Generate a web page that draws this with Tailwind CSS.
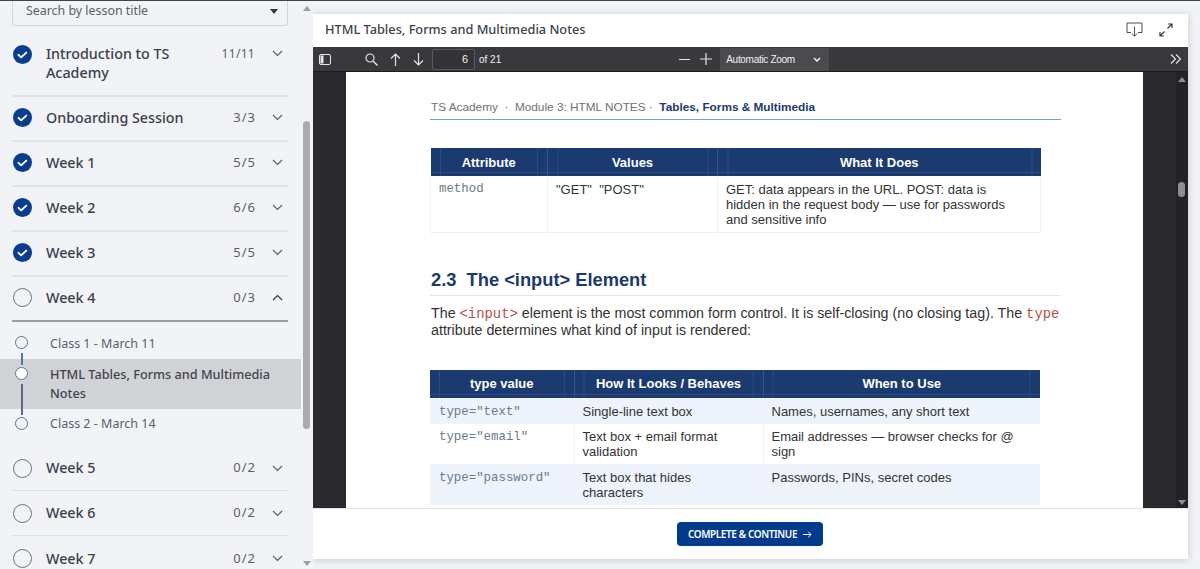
<!DOCTYPE html>
<html>
<head>
<meta charset="utf-8">
<script src="https://cdn.jsdelivr.net/npm/@tailwindcss/browser@4"></script>
</head>
<body class="m-0 h-[569px] w-[1200px] overflow-hidden bg-[#f1f3f6] font-['Noto_Sans','Open_Sans',sans-serif]">
<div class="h-px bg-[#3a4a40]"></div>
<div class="flex h-[568px]">
  <!-- Sidebar -->
  <aside class="relative h-full w-[301px] shrink-0 overflow-hidden">
    <div class="ml-3 flex h-[25px] w-[276px] items-start justify-between rounded-b-[3px] border border-t-0 border-[#d5d7dc] pl-[13px] pr-[9px] text-[12.4px] leading-[20px] text-[#5b5f6b]">
      <span>Search by lesson title</span>
      <span class="mt-[8px] h-0 w-0 border-x-[4px] border-t-[5px] border-x-transparent border-t-[#33363f]"></span>
    </div>
    <div class="ml-3 w-[276px]">
      <div class="flex h-[71px] border-b-2 border-[#e1e3e7] pt-[19px]">
        <svg class="ml-px h-[19px] w-[19px] shrink-0" viewBox="0 0 20 20"><circle cx="10" cy="10" r="10" fill="#0a3d8f"/><path d="M5.8 10.4l2.8 2.6 5.4-5" fill="none" stroke="#fff" stroke-width="2" stroke-linecap="round" stroke-linejoin="round"/></svg>
        <span class="-mt-px ml-[14px] w-[150px] text-[14.3px] font-medium leading-[19px] text-[#3b3f4c]">Introduction to TS Academy</span>
        <span class="ml-auto mr-[17px] text-[12px] leading-[18px] tracking-[0.3px] text-[#5b5f6b]">11/11</span>
        <svg class="mr-[5px] mt-[5px] h-[7px] w-[11px]" viewBox="0 0 11 7"><path d="M1 1l4.5 4.5L10 1" fill="none" stroke="#5b5f6b" stroke-width="1.2"/></svg>
      </div>
      <div class="flex h-[45px] items-center border-b-2 border-[#e1e3e7] pb-[2px]">
        <svg class="ml-px h-[19px] w-[19px] shrink-0" viewBox="0 0 20 20"><circle cx="10" cy="10" r="10" fill="#0a3d8f"/><path d="M5.8 10.4l2.8 2.6 5.4-5" fill="none" stroke="#fff" stroke-width="2" stroke-linecap="round" stroke-linejoin="round"/></svg>
        <span class="ml-[14px] text-[14.3px] font-medium text-[#3b3f4c]">Onboarding Session</span>
        <span class="ml-auto mr-[16px] text-[13px] tracking-[1px] text-[#5b5f6b]">3/3</span>
        <svg class="mr-[5px] h-[7px] w-[11px]" viewBox="0 0 11 7"><path d="M1 1l4.5 4.5L10 1" fill="none" stroke="#5b5f6b" stroke-width="1.2"/></svg>
      </div>
      <div class="flex h-[45px] items-center border-b-2 border-[#e1e3e7] pb-[2px]">
        <svg class="ml-px h-[19px] w-[19px] shrink-0" viewBox="0 0 20 20"><circle cx="10" cy="10" r="10" fill="#0a3d8f"/><path d="M5.8 10.4l2.8 2.6 5.4-5" fill="none" stroke="#fff" stroke-width="2" stroke-linecap="round" stroke-linejoin="round"/></svg>
        <span class="ml-[14px] text-[14.3px] font-medium text-[#3b3f4c]">Week 1</span>
        <span class="ml-auto mr-[16px] text-[13px] tracking-[1px] text-[#5b5f6b]">5/5</span>
        <svg class="mr-[5px] h-[7px] w-[11px]" viewBox="0 0 11 7"><path d="M1 1l4.5 4.5L10 1" fill="none" stroke="#5b5f6b" stroke-width="1.2"/></svg>
      </div>
      <div class="flex h-[45px] items-center border-b-2 border-[#e1e3e7] pb-[2px]">
        <svg class="ml-px h-[19px] w-[19px] shrink-0" viewBox="0 0 20 20"><circle cx="10" cy="10" r="10" fill="#0a3d8f"/><path d="M5.8 10.4l2.8 2.6 5.4-5" fill="none" stroke="#fff" stroke-width="2" stroke-linecap="round" stroke-linejoin="round"/></svg>
        <span class="ml-[14px] text-[14.3px] font-medium text-[#3b3f4c]">Week 2</span>
        <span class="ml-auto mr-[16px] text-[13px] tracking-[1px] text-[#5b5f6b]">6/6</span>
        <svg class="mr-[5px] h-[7px] w-[11px]" viewBox="0 0 11 7"><path d="M1 1l4.5 4.5L10 1" fill="none" stroke="#5b5f6b" stroke-width="1.2"/></svg>
      </div>
      <div class="flex h-[45px] items-center border-b-2 border-[#e1e3e7] pb-[2px]">
        <svg class="ml-px h-[19px] w-[19px] shrink-0" viewBox="0 0 20 20"><circle cx="10" cy="10" r="10" fill="#0a3d8f"/><path d="M5.8 10.4l2.8 2.6 5.4-5" fill="none" stroke="#fff" stroke-width="2" stroke-linecap="round" stroke-linejoin="round"/></svg>
        <span class="ml-[14px] text-[14.3px] font-medium text-[#3b3f4c]">Week 3</span>
        <span class="ml-auto mr-[16px] text-[13px] tracking-[1px] text-[#5b5f6b]">5/5</span>
        <svg class="mr-[5px] h-[7px] w-[11px]" viewBox="0 0 11 7"><path d="M1 1l4.5 4.5L10 1" fill="none" stroke="#5b5f6b" stroke-width="1.2"/></svg>
      </div>
      <div class="flex h-[45px] items-center border-b-2 border-[#9a9ca1] pb-[2px]">
        <span class="ml-px h-[19px] w-[19px] shrink-0 rounded-full border-[1.5px] border-[#6d707b]"></span>
        <span class="ml-[14px] text-[14.3px] font-medium text-[#3b3f4c]">Week 4</span>
        <span class="ml-auto mr-[16px] text-[13px] tracking-[1px] text-[#5b5f6b]">0/3</span>
        <svg class="mr-[5px] h-[7px] w-[11px]" viewBox="0 0 11 7"><path d="M1 6l4.5-4.5L10 6" fill="none" stroke="#33363f" stroke-width="1.2"/></svg>
      </div>
    </div>
    <!-- Lessons -->
    <div class="relative h-[124px] text-[12.5px] text-[#5b5f6b]">
      <div class="flex h-[37px] items-center pl-[50px] pt-[7px]">Class 1 - March 11</div>
      <div class="flex h-[50px] items-center bg-[#d1d2d6] pl-[50px] pr-3 text-[12.7px] font-medium leading-[19px] text-[#41444f]">HTML Tables, Forms and Multimedia Notes</div>
      <div class="flex h-[31px] items-center pl-[50px]">Class 2 - March 14</div>
      <span class="absolute left-[15px] top-[14px] h-[13px] w-[13px] rounded-full border border-[#55759f]"></span>
      <span class="absolute left-[21px] top-[31px] h-[12px] w-[1.5px] bg-[#55759f]"></span>
      <span class="absolute left-[15px] top-[45px] h-[13px] w-[13px] rounded-full border border-[#55759f] bg-white"></span>
      <span class="absolute left-[21px] top-[62px] h-[31px] w-[1.5px] bg-[#5c6a85]"></span>
      <span class="absolute left-[15px] top-[95px] h-[13px] w-[13px] rounded-full border border-[#55759f]"></span>
    </div>
    <div class="ml-3 w-[276px]">
      <div class="flex h-[45px] items-center border-b border-[#dfe1e5]">
        <span class="ml-px h-[19px] w-[19px] shrink-0 rounded-full border-[1.5px] border-[#6d707b]"></span>
        <span class="ml-[14px] text-[14.3px] font-medium text-[#3b3f4c]">Week 5</span>
        <span class="ml-auto mr-[16px] text-[13px] tracking-[1px] text-[#5b5f6b]">0/2</span>
        <svg class="mr-[5px] h-[7px] w-[11px]" viewBox="0 0 11 7"><path d="M1 1l4.5 4.5L10 1" fill="none" stroke="#5b5f6b" stroke-width="1.2"/></svg>
      </div>
      <div class="flex h-[45px] items-center border-b border-[#dfe1e5]">
        <span class="ml-px h-[19px] w-[19px] shrink-0 rounded-full border-[1.5px] border-[#6d707b]"></span>
        <span class="ml-[14px] text-[14.3px] font-medium text-[#3b3f4c]">Week 6</span>
        <span class="ml-auto mr-[16px] text-[13px] tracking-[1px] text-[#5b5f6b]">0/2</span>
        <svg class="mr-[5px] h-[7px] w-[11px]" viewBox="0 0 11 7"><path d="M1 1l4.5 4.5L10 1" fill="none" stroke="#5b5f6b" stroke-width="1.2"/></svg>
      </div>
      <div class="flex h-[45px] items-center">
        <span class="ml-px h-[19px] w-[19px] shrink-0 rounded-full border-[1.5px] border-[#6d707b]"></span>
        <span class="ml-[14px] text-[14.3px] font-medium text-[#3b3f4c]">Week 7</span>
        <span class="ml-auto mr-[16px] text-[13px] tracking-[1px] text-[#5b5f6b]">0/2</span>
        <svg class="mr-[5px] h-[7px] w-[11px]" viewBox="0 0 11 7"><path d="M1 1l4.5 4.5L10 1" fill="none" stroke="#5b5f6b" stroke-width="1.2"/></svg>
      </div>
    </div>
  </aside>
  <!-- Sidebar scrollbar -->
  <div class="relative h-full w-[12px] shrink-0 bg-[#f1f3f6]">
    <span class="absolute left-[2px] top-[5px] h-0 w-0 border-x-[4px] border-b-[5px] border-x-transparent border-b-[#9c9ea3]"></span>
    <span class="absolute left-[2px] top-[120px] h-[308px] w-[7px] rounded-full bg-[#a9abb0]"></span>
    <span class="absolute left-[2px] bottom-[3px] h-0 w-0 border-x-[4px] border-t-[5px] border-x-transparent border-t-[#9c9ea3]"></span>
  </div>
  <!-- Main panel -->
  <main class="mt-[13px] flex h-[545px] w-[875px] shrink-0 flex-col bg-white shadow-[0_1px_8px_rgba(0,0,0,0.18)]">
    <header class="flex h-[33px] shrink-0 items-center pb-[2px] pl-[12px] pr-[15px]">
      <h1 class="text-[12.75px] font-medium text-[#3b3f4c]">HTML Tables, Forms and Multimedia Notes</h1>
      <svg class="ml-auto h-[15px] w-[17px]" viewBox="0 0 17 15"><path d="M5 10.5H1V1h15v9.5h-4" fill="none" stroke="#4a4d55" stroke-width="1"/><path d="M8.5 4.5V14M5.8 11.5l2.7 2.7 2.7-2.7" fill="none" stroke="#4a4d55" stroke-width="1"/></svg>
      <svg class="ml-[16px] h-[14px] w-[14px]" viewBox="0 0 14 14"><path d="M8.5 5.5L13 1M9 1h4v4M5.5 8.5L1 13M1 9v4h4" fill="none" stroke="#33363f" stroke-width="1.2"/></svg>
    </header>
    <!-- PDF toolbar -->
    <div class="flex h-[25px] shrink-0 items-center border-b border-[#1d1d20] bg-[#38383d] text-[10px] text-[#f0f0f2] font-['Liberation_Sans',sans-serif]">
      <svg class="ml-[6px] h-[11px] w-[12px]" viewBox="0 0 12 11"><rect x="0.5" y="0.5" width="11" height="10" rx="1.5" fill="none" stroke="#e6e6e8"/><rect x="1.5" y="1.5" width="3" height="8" fill="#e6e6e8"/></svg>
      <svg class="ml-[34px] h-[13px] w-[13px]" viewBox="0 0 13 13"><circle cx="5" cy="5" r="4" fill="none" stroke="#e6e6e8" stroke-width="1.2"/><path d="M8 8l4.5 4.5" stroke="#e6e6e8" stroke-width="1.4"/></svg>
      <svg class="ml-[12px] h-[13px] w-[11px]" viewBox="0 0 11 13"><path d="M5.5 13V1M1 5.5l4.5-4.5L10 5.5" fill="none" stroke="#e6e6e8" stroke-width="1.2"/></svg>
      <svg class="ml-[12px] h-[13px] w-[11px]" viewBox="0 0 11 13"><path d="M5.5 0v12M1 7.5L5.5 12 10 7.5" fill="none" stroke="#e6e6e8" stroke-width="1.2"/></svg>
      <span class="ml-[8px] flex h-[21px] w-[43px] items-center justify-end rounded-[2px] border border-[#5a5a60] bg-[#333338] pr-[6px] text-[11px]">6</span>
      <span class="ml-[4px] text-[10px] font-medium">of 21</span>
      <svg class="ml-[178px] h-px w-[11px]" viewBox="0 0 11 1"><rect width="11" height="1" fill="#e6e6e8"/></svg>
      <svg class="ml-[10px] h-[12px] w-[12px]" viewBox="0 0 12 12"><path d="M6 0v12M0 6h12" stroke="#e6e6e8" stroke-width="1.2"/></svg>
      <span class="ml-[8px] flex h-[23px] w-[109px] items-center justify-between bg-[#4a4a4f] pl-[6px] pr-[8px] tracking-[-0.3px]">Automatic Zoom<svg class="h-[5px] w-[8px]" viewBox="0 0 8 5"><path d="M1 1l3 3 3-3" fill="none" stroke="#f0f0f2" stroke-width="1.5"/></svg></span>
      <svg class="ml-auto mr-[6px] h-[10px] w-[12px]" viewBox="0 0 12 10"><path d="M1 0.5L5.5 5 1 9.5M6 0.5L10.5 5 6 9.5" fill="none" stroke="#e6e6e8" stroke-width="1.1"/></svg>
    </div>
    <!-- PDF viewer -->
    <div class="relative flex min-h-0 flex-1 bg-[#2a2a2e] font-['Liberation_Sans',sans-serif]">
      <div class="ml-[33px] h-full w-[797px] overflow-hidden bg-white pl-[84px] pr-[82px]">
        <div class="flex h-[48px] items-end border-b border-[#5fa8d8] pb-[2px] pl-px text-[11.8px] text-[#707070]">
          <span>TS Academy &nbsp;·&nbsp; Module 3: HTML NOTES ·&nbsp;&nbsp;<b class="text-[#1a3a6e]">Tables, Forms &amp; Multimedia</b></span>
        </div>
        <table class="mt-[28px] w-[610px] table-fixed border-collapse text-[13px] leading-[15px] text-[#333]">
          <colgroup><col class="w-[117px]"><col class="w-[170px]"><col class="w-[323px]"></colgroup>
          <thead class="bg-[#1a3a70] text-[13px] font-bold text-white">
            <tr class="h-[28px]">
              <th class="border-r border-[#34558c] bg-[linear-gradient(90deg,transparent_9px,#2b4a82_9px,#2b4a82_10px,transparent_10px,transparent_calc(100%_-_10px),#2b4a82_calc(100%_-_10px),#2b4a82_calc(100%_-_9px),transparent_calc(100%_-_9px)),linear-gradient(180deg,transparent_24px,#2b4a82_24px,#2b4a82_25px,transparent_25px)]">Attribute</th>
              <th class="border-r border-[#34558c] bg-[linear-gradient(90deg,transparent_9px,#2b4a82_9px,#2b4a82_10px,transparent_10px,transparent_calc(100%_-_10px),#2b4a82_calc(100%_-_10px),#2b4a82_calc(100%_-_9px),transparent_calc(100%_-_9px)),linear-gradient(180deg,transparent_24px,#2b4a82_24px,#2b4a82_25px,transparent_25px)]">Values</th>
              <th class="bg-[linear-gradient(90deg,transparent_9px,#2b4a82_9px,#2b4a82_10px,transparent_10px,transparent_calc(100%_-_10px),#2b4a82_calc(100%_-_10px),#2b4a82_calc(100%_-_9px),transparent_calc(100%_-_9px)),linear-gradient(180deg,transparent_24px,#2b4a82_24px,#2b4a82_25px,transparent_25px)]">What It Does</th>
            </tr>
          </thead>
          <tbody>
            <tr class="h-[56px] border-b border-[#f0f0f2] align-top">
              <td class="border-x border-[#f2f2f4] pl-[8px] pt-[6px] font-['Liberation_Mono',monospace] text-[12.4px] text-[#6b7a8c]">method</td>
              <td class="border-r border-[#f2f2f4] pl-[8px] pt-[6px]">"GET" &nbsp;"POST"</td>
              <td class="border-r border-[#f2f2f4] pl-[8px] pr-[24px] pt-[6px]">GET: data appears in the URL. POST: data is hidden in the request body — use for passwords and sensitive info</td>
            </tr>
          </tbody>
        </table>
        <h2 class="mt-[37px] h-[26px] border-b border-[#e4e6ec] pl-px text-[18.3px] font-bold leading-[20px] text-[#1a3a6e]">2.3&nbsp; The &lt;input&gt; Element</h2>
        <p class="mt-[9px] w-[640px] pl-px text-[14.25px] leading-[16px] text-[#333]">The <span class="font-['Liberation_Mono',monospace] text-[13.9px] text-[#b4504c]">&lt;input&gt;</span> element is the most common form control. It is self-closing (no closing tag). The <span class="font-['Liberation_Mono',monospace] text-[13.9px] text-[#b4504c]">type</span> attribute determines what kind of input is rendered:</p>
        <table class="mt-[32px] w-[610px] table-fixed border-collapse text-[13px] leading-[15px] text-[#333]">
          <colgroup><col class="w-[144px]"><col class="w-[189px]"><col class="w-[277px]"></colgroup>
          <thead class="bg-[#1a3a70] text-[13px] font-bold text-white">
            <tr class="h-[28px]">
              <th class="border-r border-[#34558c] bg-[linear-gradient(90deg,transparent_9px,#2b4a82_9px,#2b4a82_10px,transparent_10px,transparent_calc(100%_-_10px),#2b4a82_calc(100%_-_10px),#2b4a82_calc(100%_-_9px),transparent_calc(100%_-_9px)),linear-gradient(180deg,transparent_24px,#2b4a82_24px,#2b4a82_25px,transparent_25px)]">type value</th>
              <th class="border-r border-[#34558c] bg-[linear-gradient(90deg,transparent_9px,#2b4a82_9px,#2b4a82_10px,transparent_10px,transparent_calc(100%_-_10px),#2b4a82_calc(100%_-_10px),#2b4a82_calc(100%_-_9px),transparent_calc(100%_-_9px)),linear-gradient(180deg,transparent_24px,#2b4a82_24px,#2b4a82_25px,transparent_25px)]">How It Looks / Behaves</th>
              <th class="bg-[linear-gradient(90deg,transparent_9px,#2b4a82_9px,#2b4a82_10px,transparent_10px,transparent_calc(100%_-_10px),#2b4a82_calc(100%_-_10px),#2b4a82_calc(100%_-_9px),transparent_calc(100%_-_9px)),linear-gradient(180deg,transparent_24px,#2b4a82_24px,#2b4a82_25px,transparent_25px)]">When to Use</th>
            </tr>
          </thead>
          <tbody>
            <tr class="h-[26px] bg-[#eef3fc] align-top">
              <td class="border-r border-[#f0f3f9] pl-[9px] pt-[7px] font-['Liberation_Mono',monospace] text-[12.4px] text-[#6b7a8c]">type="text"</td>
              <td class="border-r border-[#f0f3f9] pl-[8px] pt-[6px]">Single-line text box</td>
              <td class="pl-[8px] pt-[6px]">Names, usernames, any short text</td>
            </tr>
            <tr class="h-[40px] align-top">
              <td class="border-r border-[#f0f3f9] pl-[9px] pt-[6px] font-['Liberation_Mono',monospace] text-[12.4px] text-[#6b7a8c]">type="email"</td>
              <td class="border-r border-[#f0f3f9] pl-[8px] pr-[20px] pt-[5px]">Text box + email format validation</td>
              <td class="pl-[8px] pr-[20px] pt-[5px]">Email addresses — browser checks for @ sign</td>
            </tr>
            <tr class="h-[41px] bg-[#eef3fc] align-top">
              <td class="border-r border-[#f0f3f9] pl-[9px] pt-[7px] font-['Liberation_Mono',monospace] text-[12.4px] text-[#6b7a8c]">type="password"</td>
              <td class="border-r border-[#f0f3f9] pl-[8px] pr-[20px] pt-[6px]">Text box that hides characters</td>
              <td class="pl-[8px] pt-[6px]">Passwords, PINs, secret codes</td>
            </tr>
          </tbody>
        </table>
      </div>
      <div class="relative ml-[33px] h-full w-[12px] bg-[#232326]">
        <span class="absolute left-[2px] top-[5px] h-0 w-0 border-x-[4px] border-b-[5px] border-x-transparent border-b-[#8e8e92]"></span>
        <span class="absolute left-[2px] top-[110px] h-[15px] w-[7px] rounded-full bg-[#8e8e92]"></span>
        <span class="absolute left-[2px] bottom-[3px] h-0 w-0 border-x-[4px] border-t-[5px] border-x-transparent border-t-[#8e8e92]"></span>
      </div>
    </div>
    <!-- Footer -->
    <div class="flex h-[51px] shrink-0 items-center justify-center border-t border-[#e3e4e7] bg-white">
      <button class="mr-px flex h-[24px] w-[146px] items-center justify-center gap-[6px] rounded-[4px] bg-[#023a8c] text-[10px] font-semibold tracking-[-0.4px] text-white">COMPLETE &amp; CONTINUE
        <svg class="h-[7px] w-[9px]" viewBox="0 0 9 7"><path d="M0 3.5h8M5.2 0.7L8 3.5 5.2 6.3" fill="none" stroke="#fff" stroke-width="1"/></svg>
      </button>
    </div>
  </main>
</div>
</body>
</html>
